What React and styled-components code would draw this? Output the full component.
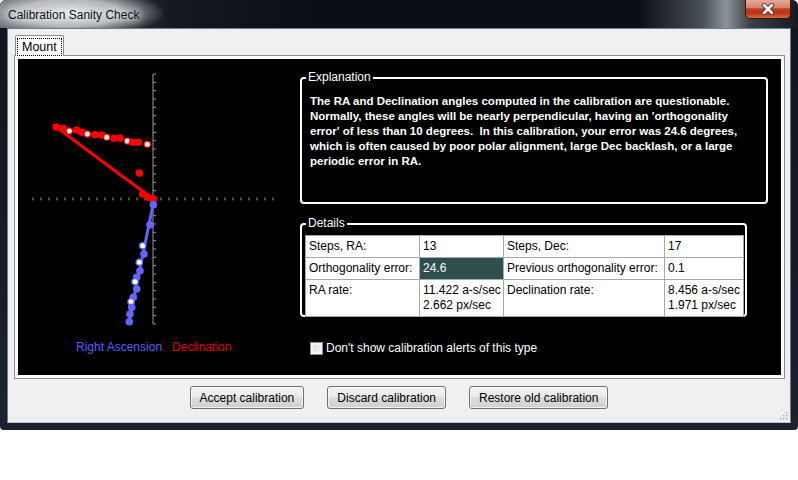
import React from 'react';
import styled, { createGlobalStyle } from 'styled-components';

const GlobalStyle = createGlobalStyle`
  body {
    margin: 0;
    background: #ffffff;
    font-family: "Liberation Sans", Arial, sans-serif;
    font-size: 12px;
  }
`;

const Window = styled.div`
  width: 798px;
  height: 430px;
  display: flex;
  flex-direction: column;
  background: linear-gradient(to bottom, #10141c 0%, #161b26 60%, #1c2230 100%);
  border-radius: 6px 6px 4px 4px;
  overflow: hidden;
`;

const TitleBar = styled.div`
  height: 28px;
  flex: none;
  display: flex;
  align-items: flex-start;
  background:
    radial-gradient(ellipse 95px 24px at 70px 13px, rgba(232, 235, 238, 0.97) 0%, rgba(220, 224, 228, 0.75) 55%, rgba(200, 205, 210, 0) 100%),
    linear-gradient(to right, #5c6168 0%, #14181f 22%, #0b0e14 40%, #0b0e14 80%, #4a5058 88%, #8d939b 91%, #3a4048 94%, #151a22 100%);
`;

const Title = styled.div`
  padding: 8px 0 0 8px;
  line-height: 14px;
  color: #101010;
  text-shadow: 0 0 6px rgba(255, 255, 255, 0.9), 0 0 10px rgba(255, 255, 255, 0.7);
`;

const CloseButton = styled.div`
  margin-left: auto;
  margin-right: 7px;
  width: 46px;
  height: 19px;
  box-sizing: border-box;
  border: 1px solid #3c1208;
  border-top: none;
  border-radius: 0 0 5px 5px;
  background: linear-gradient(to bottom, #e8a898 0%, #d7826e 42%, #c23a1e 50%, #b8331b 72%, #d86a40 100%);
  display: flex;
  align-items: center;
  justify-content: center;
`;

const Client = styled.div`
  position: relative;
  flex: 1;
  margin: 0 7px;
  border: 1px solid #6f7a88;
  border-bottom-color: #b9c1cb;
  background: #f0f0f0;
  display: flex;
  flex-direction: column;
  padding-top: 6px;
`;

const BottomFrame = styled.div`
  height: 7px;
  flex: none;
`;

const TabStrip = styled.div`
  display: flex;
  padding-left: 7px;
  position: relative;
  z-index: 1;
`;

const Tab = styled.div`
  height: 21px;
  box-sizing: border-box;
  border: 1px solid #898c95;
  border-bottom: none;
  border-radius: 2px 2px 0 0;
  background: #ffffff;
  margin-bottom: -1px;
  padding: 2px 1px 0;
`;

const TabLabel = styled.span`
  display: block;
  border: 1px dotted #000;
  padding: 0 4px 0 4px;
  line-height: 16px;
  font-size: 12.5px;
  color: #000;
`;

const TabPage = styled.div`
  margin: 0 5px 0 6px;
  height: 324px;
  box-sizing: border-box;
  border: 1px solid #898c95;
  background: #fcfcfc;
  padding: 3px;
  display: flex;
`;

const Panel = styled.div`
  flex: 1;
  background: #000;
  display: flex;
`;

const ChartColumn = styled.div`
  width: 282px;
  flex: none;
  display: flex;
  flex-direction: column;
`;

const Legend = styled.div`
  display: flex;
  gap: 10px;
  padding-left: 58px;
  line-height: 15px;
`;

const LegendItem = styled.span`
  color: ${({ $color }) => $color};
`;

const InfoColumn = styled.div`
  flex: 1;
  display: flex;
  flex-direction: column;
  padding-top: 18px;
`;

const GroupBox = styled.div`
  position: relative;
  width: ${({ $width }) => $width}px;
  height: ${({ $height }) => $height}px;
  box-sizing: border-box;
  border: 2px solid #ffffff;
  border-radius: 4px;
  margin-top: ${({ $top }) => $top || 0}px;
  padding: ${({ $padding }) => $padding};
`;

const GroupTitle = styled.span`
  position: absolute;
  top: -9px;
  left: 4px;
  padding: 0 2px;
  background: #000;
  color: #fff;
  line-height: 15px;
`;

const Explanation = styled.p`
  margin: 0;
  color: #ffffff;
  font-weight: bold;
  font-size: 11.5px;
  line-height: 15px;
  white-space: nowrap;
`;

const DetailsTable = styled.table`
  border-collapse: collapse;
  table-layout: fixed;
  width: 438px;
  background: #ffffff;
  color: #000;
`;

const Cell = styled.td`
  border: 1px solid #a8a8a8;
  padding: 3px 3px;
  line-height: 15px;
  vertical-align: top;
  white-space: nowrap;
  background: ${({ $highlight }) => ($highlight ? '#2f4f4f' : '#ffffff')};
  color: ${({ $highlight }) => ($highlight ? '#ffffff' : '#000000')};
`;

const CheckRow = styled.label`
  display: flex;
  align-items: center;
  margin-top: 24px;
  padding-left: 10px;
  color: #ffffff;
  line-height: 15px;
`;

const CheckBox = styled.span`
  width: 13px;
  height: 13px;
  box-sizing: border-box;
  border: 1px solid #8e8f8f;
  background: linear-gradient(135deg, #d6d6d6 0%, #e8e8e8 50%, #f6f6f6 100%);
  box-shadow: inset 0 0 0 2px #f4f4f4;
  margin-right: 3px;
`;

const ButtonRow = styled.div`
  display: flex;
  justify-content: center;
  gap: 23px;
  margin-top: 7px;
`;

const Button = styled.button`
  height: 23px;
  padding: 0 9px;
  font-family: inherit;
  font-size: 12px;
  color: #000;
  border: 1px solid #707070;
  border-radius: 3px;
  background: linear-gradient(to bottom, #f2f2f2 0%, #ebebeb 49%, #dddddd 50%, #cfcfcf 100%);
  box-shadow: inset 0 0 0 1px rgba(255, 255, 255, 0.7);
`;

const Grip = styled.svg`
  position: absolute;
  right: 2px;
  bottom: 2px;
`;

const redDots = [
  [38, 68, 0], [45.3, 69.3, 0], [51.3, 72, 1], [58.7, 71, 0], [63.7, 73.3, 0],
  [69.3, 75, 1], [77, 75.7, 0], [83.7, 76, 0], [88.7, 78.3, 1], [96, 79.3, 0],
  [102, 79, 0], [109.3, 82, 1], [114.7, 83.3, 0], [120.3, 83.3, 0], [129.3, 85.3, 1],
  [121.3, 114, 0], [124.7, 135, 0], [130.3, 138.3, 0], [135.3, 140, 0],
];

const blueDots = [
  [135.3, 145.7, 0], [132, 165.7, 0], [124.7, 186.7, 1], [126, 195, 0],
  [121.3, 203.3, 1], [122, 211.7, 0], [118.7, 218.3, 0], [117, 222.7, 1],
  [118.7, 230, 0], [115.3, 238.3, 0], [113, 242.7, 1], [113.7, 248.3, 0],
  [112, 255, 0], [111.3, 262.7, 0],
];

const RED = '#ff0000';
const BLUE = '#6464ff';

const Chart = () => {
  const hTicks = [];
  for (let i = -15; i <= 15; i++) hTicks.push(135 + i * 8);
  const vTicks = [];
  for (let i = -15; i <= 15; i++) vTicks.push(140 + i * 8.33);

  const dots = (list, color) =>
    list.map(([x, y, hollow], i) => (
      <g key={i}>
        <circle cx={x} cy={y} r={3.8} fill={color} />
        {hollow ? <circle cx={x} cy={y} r={2.5} fill="#ffffff" /> : null}
      </g>
    ));

  return (
    <svg width="272" height="281" viewBox="0 0 272 281">
      <line x1="135" y1="15" x2="135" y2="265" stroke="#9a9a9a" strokeWidth="1" />
      {vTicks.map((y, i) => (
        <line key={`v${i}`} x1="135" y1={y} x2="138" y2={y} stroke="#9a9a9a" strokeWidth="1" />
      ))}
      {hTicks.map((x, i) => (
        <line key={`h${i}`} x1={x} y1="138.5" x2={x} y2="141.5" stroke="#9a9a9a" strokeWidth="1" />
      ))}
      <line x1="38" y1="68" x2="135" y2="140" stroke={RED} strokeWidth="3" />
      <line x1="135" y1="146" x2="111" y2="263" stroke={BLUE} strokeWidth="3" />
      {dots(redDots, RED)}
      {dots(blueDots, BLUE)}
    </svg>
  );
};

const App = () => (
  <>
    <GlobalStyle />
    <Window>
      <TitleBar>
        <Title>Calibration Sanity Check</Title>
        <CloseButton>
          <svg width="14" height="12" viewBox="0 0 14 12">
            <path d="M3 2 L11 10 M11 2 L3 10" stroke="#4a1a10" strokeWidth="4.4" strokeLinecap="round" />
            <path d="M3 2 L11 10 M11 2 L3 10" stroke="#ffffff" strokeWidth="2.8" strokeLinecap="round" />
          </svg>
        </CloseButton>
      </TitleBar>
      <Client>
        <TabStrip>
          <Tab>
            <TabLabel>Mount</TabLabel>
          </Tab>
        </TabStrip>
        <TabPage>
          <Panel>
            <ChartColumn>
              <Chart />
              <Legend>
                <LegendItem $color="#5c5cff">Right Ascension</LegendItem>
                <LegendItem $color="#e00000">Declination</LegendItem>
              </Legend>
            </ChartColumn>
            <InfoColumn>
              <GroupBox $width={468} $height={127} $padding="15px 0 0 8px">
                <GroupTitle>Explanation</GroupTitle>
                <Explanation>
                  The RA and Declination angles computed in the calibration are questionable.
                  <br />
                  Normally, these angles will be nearly perpendicular, having an 'orthogonality
                  <br />
                  error' of less than 10 degrees.{'\u00a0 '}In this calibration, your error was 24.6 degrees,
                  <br />
                  which is often caused by poor polar alignment, large Dec backlash, or a large
                  <br />
                  periodic error in RA.
                </Explanation>
              </GroupBox>
              <GroupBox $width={447} $height={94} $top={19} $padding="10px 0 0 3px">
                <GroupTitle>Details</GroupTitle>
                <DetailsTable>
                  <colgroup>
                    <col style={{ width: 114 }} />
                    <col style={{ width: 84 }} />
                    <col style={{ width: 161 }} />
                    <col style={{ width: 79 }} />
                  </colgroup>
                  <tbody>
                    <tr>
                      <Cell>Steps, RA:</Cell>
                      <Cell>13</Cell>
                      <Cell>Steps, Dec:</Cell>
                      <Cell>17</Cell>
                    </tr>
                    <tr>
                      <Cell>Orthogonality error:</Cell>
                      <Cell $highlight>24.6</Cell>
                      <Cell>Previous orthogonality error:</Cell>
                      <Cell>0.1</Cell>
                    </tr>
                    <tr>
                      <Cell>RA rate:</Cell>
                      <Cell>
                        11.422 a-s/sec
                        <br />
                        2.662 px/sec
                      </Cell>
                      <Cell>Declination rate:</Cell>
                      <Cell>
                        8.456 a-s/sec
                        <br />
                        1.971 px/sec
                      </Cell>
                    </tr>
                  </tbody>
                </DetailsTable>
              </GroupBox>
              <CheckRow>
                <CheckBox />
                Don't show calibration alerts of this type
              </CheckRow>
            </InfoColumn>
          </Panel>
        </TabPage>
        <ButtonRow>
          <Button>Accept calibration</Button>
          <Button>Discard calibration</Button>
          <Button>Restore old calibration</Button>
        </ButtonRow>
        <Grip width="10" height="10" viewBox="0 0 10 10">
          {[[8, 2], [8, 5], [5, 5], [8, 8], [5, 8], [2, 8]].map(([x, y], i) => (
            <rect key={i} x={x} y={y} width="1.5" height="1.5" fill="#a8a8a8" />
          ))}
        </Grip>
      </Client>
      <BottomFrame />
    </Window>
  </>
);

export default App;
